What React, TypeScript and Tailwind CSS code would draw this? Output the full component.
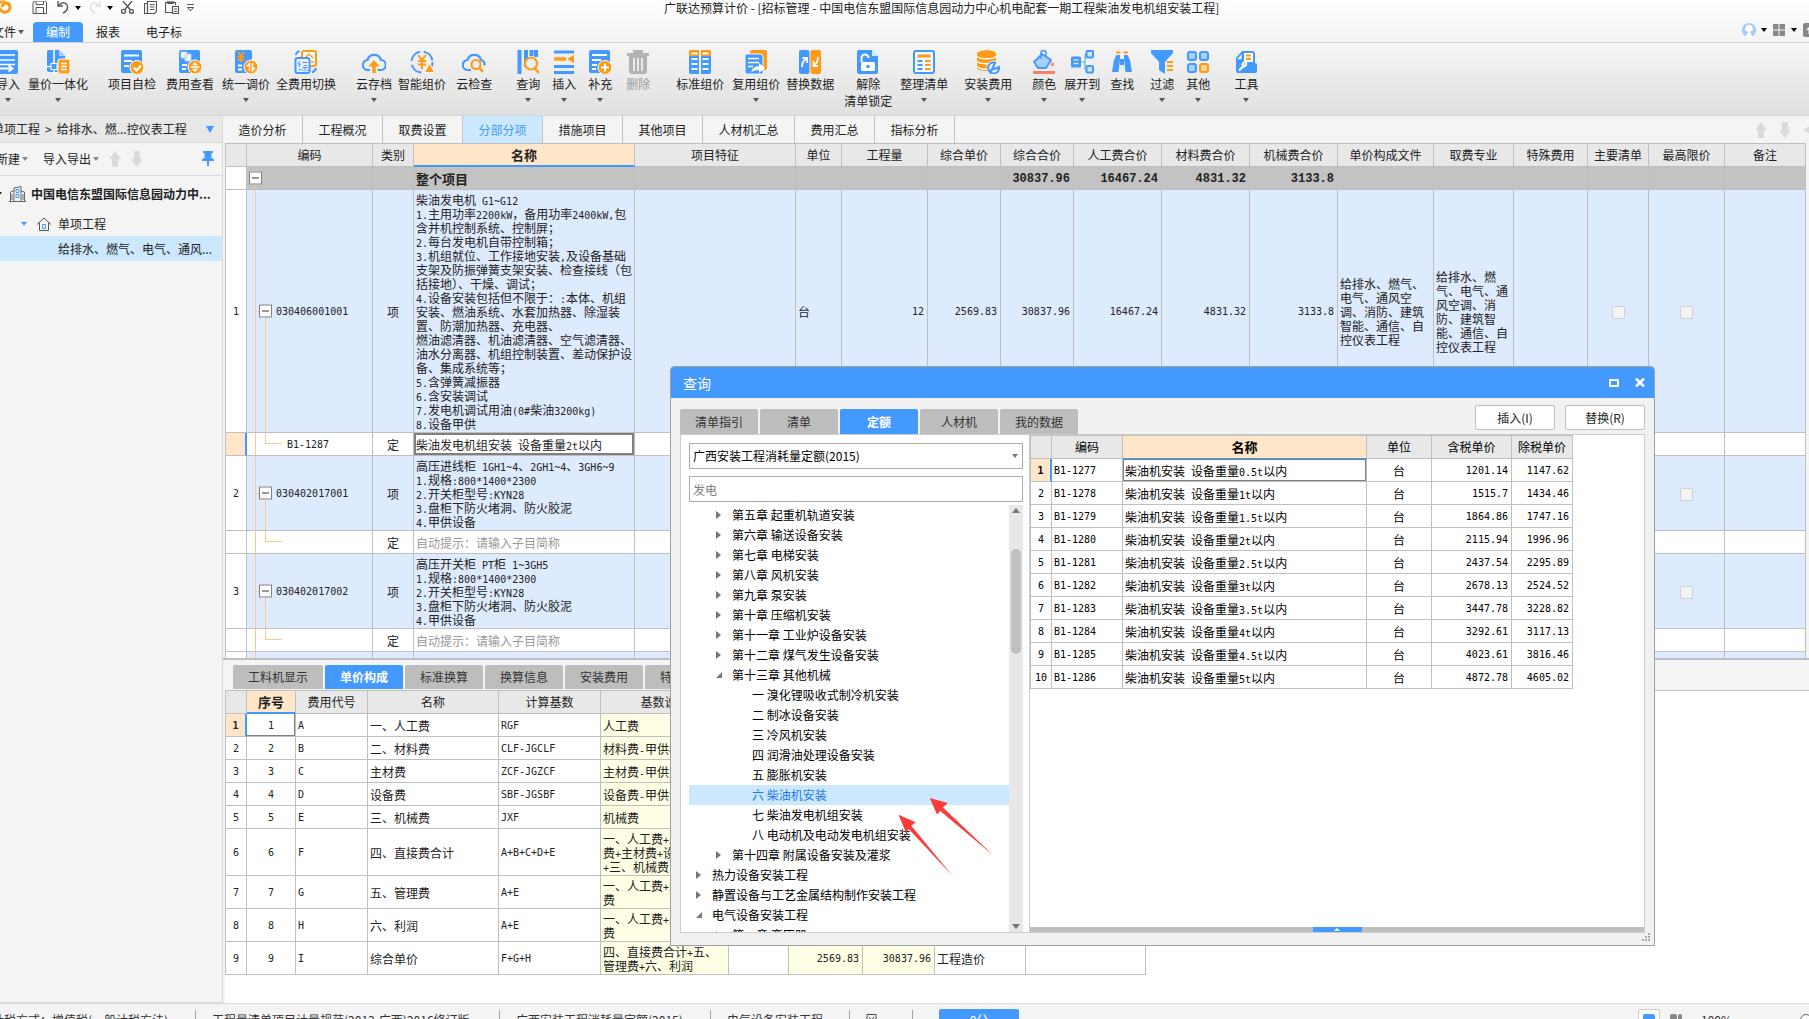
import React from "react";

interface RibbonItem {
  label: string;
  second?: string;
  icon: string;
  space: string;
  menu?: boolean;
  disabled?: boolean;
}

interface GridRow {
  kind: "item" | "quota";
  no?: string;
  code?: string;
  lines: string[];
  values?: string[];
  files?: string[];
  majors?: string[];
  active?: boolean;
  hint?: boolean;
}

interface TreeNode {
  text: string;
  level: number;
  state?: "open" | "closed";
  selected?: boolean;
}

const ribbonItems: RibbonItem[] = [
  { label: "导入", icon: "import", space: "-ml-1", menu: true },
  { label: "量价一体化", icon: "merge", space: "ml-2", menu: true },
  { label: "项目自检", icon: "check", space: "ml-5" },
  { label: "费用查看", icon: "fee", space: "ml-2.5" },
  { label: "统一调价", icon: "adjust", space: "ml-2", menu: true },
  { label: "全费用切换", icon: "switch", space: "ml-1.5" },
  { label: "云存档", icon: "cloudUp", space: "ml-5", menu: true },
  { label: "智能组价", icon: "smart", space: "ml-1.5" },
  { label: "云检查", icon: "cloudCheck", space: "ml-2.5" },
  { label: "查询", icon: "query", space: "ml-6", menu: true },
  { label: "插入", icon: "insert", space: "ml-3", menu: true },
  { label: "补充", icon: "supply", space: "ml-3", menu: true },
  { label: "删除", icon: "trash", space: "ml-3.5", disabled: true },
  { label: "标准组价", icon: "standard", space: "ml-6.5" },
  { label: "复用组价", icon: "reuse", space: "ml-2", menu: true },
  { label: "替换数据", icon: "replace", space: "ml-1.5" },
  { label: "解除", second: "清单锁定", icon: "unlock", space: "ml-2.5" },
  { label: "整理清单", icon: "tidy", space: "ml-2", menu: true },
  { label: "安装费用", icon: "install", space: "ml-4", menu: true },
  { label: "颜色", icon: "color", space: "ml-5", menu: true },
  { label: "展开到", icon: "expand", space: "ml-2", menu: true },
  { label: "查找", icon: "find", space: "ml-2.5" },
  { label: "过滤", icon: "filter", space: "ml-4", menu: true },
  { label: "其他", icon: "other", space: "ml-3", menu: true },
  { label: "工具", icon: "tools", space: "ml-6", menu: true },
];

const sectionTabs = [
  "造价分析",
  "工程概况",
  "取费设置",
  "分部分项",
  "措施项目",
  "其他项目",
  "人材机汇总",
  "费用汇总",
  "指标分析",
];

const gridHeaders = [
  "",
  "编码",
  "类别",
  "名称",
  "项目特征",
  "单位",
  "工程量",
  "综合单价",
  "综合合价",
  "人工费合价",
  "材料费合价",
  "机械费合价",
  "单价构成文件",
  "取费专业",
  "特殊费用",
  "主要清单",
  "最高限价",
  "备注",
];

const gridWidths = [
  "w-[21px]",
  "w-[126px]",
  "w-[41px]",
  "w-[221px]",
  "w-[161px]",
  "w-[46px]",
  "w-[86px]",
  "w-[73px]",
  "w-[73px]",
  "w-[88px]",
  "w-[88px]",
  "w-[88px]",
  "w-[96px]",
  "w-[80px]",
  "w-[74px]",
  "w-[61px]",
  "w-[76px]",
  "",
];

const gridRows: GridRow[] = [
  {
    kind: "item",
    no: "1",
    code: "030406001001",
    lines: [
      "柴油发电机 G1~G12",
      "1.主用功率2200kW，备用功率2400kW,包",
      "含并机控制系统、控制屏；",
      "2.每台发电机自带控制箱；",
      "3.机组就位、工作接地安装,及设备基础",
      "支架及防振弹簧支架安装、检查接线（包",
      "括接地）、干燥、调试；",
      "4.设备安装包括但不限于：:本体、机组",
      "安装、燃油系统、水套加热器、除湿装",
      "置、防潮加热器、充电器、",
      "燃油滤清器、机油滤清器、空气滤清器、",
      "油水分离器、机组控制装置、差动保护设",
      "备、集成系统等；",
      "5.含弹簧减振器",
      "6.含安装调试",
      "7.发电机调试用油(0#柴油3200kg)",
      "8.设备甲供",
    ],
    values: ["12", "2569.83", "30837.96", "16467.24", "4831.32", "3133.8"],
    files: ["给排水、燃气、", "电气、通风空", "调、消防、建筑", "智能、通信、自", "控仪表工程"],
    majors: ["给排水、燃", "气、电气、通", "风空调、消", "防、建筑智", "能、通信、自", "控仪表工程"],
  },
  { kind: "quota", code: "B1-1287", lines: ["柴油发电机组安装 设备重量2t以内"], active: true },
  {
    kind: "item",
    no: "2",
    code: "030402017001",
    lines: [
      "高压进线柜 1GH1~4、2GH1~4、3GH6~9",
      "1.规格:800*1400*2300",
      "2.开关柜型号:KYN28",
      "3.盘柜下防火堵洞、防火胶泥",
      "4.甲供设备",
    ],
  },
  { kind: "quota", lines: ["自动提示：请输入子目简称"], hint: true },
  {
    kind: "item",
    no: "3",
    code: "030402017002",
    lines: [
      "高压开关柜 PT柜 1~3GH5",
      "1.规格:800*1400*2300",
      "2.开关柜型号:KYN28",
      "3.盘柜下防火堵洞、防火胶泥",
      "4.甲供设备",
    ],
  },
  { kind: "quota", lines: ["自动提示：请输入子目简称"], hint: true },
  { kind: "item", lines: ["高压出线柜 1~3GH7~12、4GH5~8"] },
];

const detailTabs = ["工料机显示", "单价构成", "标准换算", "换算信息", "安装费用", "特征及内容"];

const detailWidths = [
  "w-[21px]",
  "w-[49px]",
  "w-[72px]",
  "w-[131px]",
  "w-[102px]",
  "w-[128px]",
  "w-[60px]",
  "w-[74px]",
  "w-[72px]",
  "w-[91px]",
  "w-[120px]",
];

const detailHeaders = ["", "序号", "费用代号", "名称", "计算基数", "基数说明", "", "", "", "", ""];

const detailRows = [
  { code: "A", name: "一、人工费", base: "RGF", note: ["人工费"] },
  { code: "B", name: "二、材料费", base: "CLF-JGCLF", note: ["材料费-甲供材料费"] },
  { code: "C", name: "主材费", base: "ZCF-JGZCF", note: ["主材费-甲供主材费"] },
  { code: "D", name: "设备费", base: "SBF-JGSBF", note: ["设备费-甲供设备费"] },
  { code: "E", name: "三、机械费", base: "JXF", note: ["机械费"] },
  { code: "F", name: "四、直接费合计", base: "A+B+C+D+E", note: ["一、人工费+二、材料", "费+主材费+设备费", "+三、机械费"] },
  { code: "G", name: "五、管理费", base: "A+E", note: ["一、人工费+三、机械", "费"] },
  { code: "H", name: "六、利润", base: "A+E", note: ["一、人工费+三、机械", "费"] },
  {
    code: "I",
    name: "综合单价",
    base: "F+G+H",
    note: ["四、直接费合计+五、", "管理费+六、利润"],
    price: "2569.83",
    total: "30837.96",
    type: "工程造价",
  },
];

const treeNodes: TreeNode[] = [
  { text: "第五章 起重机轨道安装", level: 1, state: "closed" },
  { text: "第六章 输送设备安装", level: 1, state: "closed" },
  { text: "第七章 电梯安装", level: 1, state: "closed" },
  { text: "第八章 风机安装", level: 1, state: "closed" },
  { text: "第九章 泵安装", level: 1, state: "closed" },
  { text: "第十章 压缩机安装", level: 1, state: "closed" },
  { text: "第十一章 工业炉设备安装", level: 1, state: "closed" },
  { text: "第十二章 煤气发生设备安装", level: 1, state: "closed" },
  { text: "第十三章 其他机械", level: 1, state: "open" },
  { text: "一 溴化锂吸收式制冷机安装", level: 2 },
  { text: "二 制冰设备安装", level: 2 },
  { text: "三 冷风机安装", level: 2 },
  { text: "四 润滑油处理设备安装", level: 2 },
  { text: "五 膨胀机安装", level: 2 },
  { text: "六 柴油机安装", level: 2, selected: true },
  { text: "七 柴油发电机组安装", level: 2 },
  { text: "八 电动机及电动发电机组安装", level: 2 },
  { text: "第十四章 附属设备安装及灌浆", level: 1, state: "closed" },
  { text: "热力设备安装工程", level: 0, state: "closed" },
  { text: "静置设备与工艺金属结构制作安装工程", level: 0, state: "closed" },
  { text: "电气设备安装工程", level: 0, state: "open" },
  { text: "第一章 变压器", level: 1, state: "closed" },
];

const quotaRows = [
  ["B1-1277", "0.5t", "1201.14", "1147.62"],
  ["B1-1278", "1t", "1515.7", "1434.46"],
  ["B1-1279", "1.5t", "1864.86", "1747.16"],
  ["B1-1280", "2t", "2115.94", "1996.96"],
  ["B1-1281", "2.5t", "2437.54", "2295.89"],
  ["B1-1282", "3t", "2678.13", "2524.52"],
  ["B1-1283", "3.5t", "3447.78", "3228.82"],
  ["B1-1284", "4t", "3292.61", "3117.13"],
  ["B1-1285", "4.5t", "4023.61", "3816.46"],
  ["B1-1286", "5t", "4872.78", "4605.02"],
];

const BLUE = "#4499ff";
const ORANGE = "#ff9a17";

const ribbonIcons: Record<string, React.ReactNode> = {
  import: (
    <>
      <rect x="1" y="0" width="21" height="24" rx="2" fill={BLUE} />
      <path d="M4 5h15M4 10h15M4 14.500h15" stroke="#fff" strokeWidth="1.500" />
      <path d="M4 18.500h12M12.500 15.500l4 3-4 3" stroke="#fff" strokeWidth="2" fill="none" />
    </>
  ),
  merge: (
    <>
      <path d="M1 2a2 2 0 0 1 2-2h10l6 6v16H3a2 2 0 0 1-2-2z" fill={BLUE} />
      <path d="M13 0v6h6z" fill="#a8d0ff" />
      <path d="M8 0v24M0 16.500h12" stroke="#fff" strokeWidth="1.500" />
      <rect x="5" y="13.500" width="6" height="6" fill={BLUE} stroke="#fff" />
      <rect x="12" y="9" width="12" height="15" rx="2" fill={ORANGE} stroke="#fff" />
      <path d="M15 13.500h6M15 16.500h6M15 19.500h6" stroke="#fff" strokeWidth="1.500" />
    </>
  ),
  check: (
    <>
      <rect x="1" y="0" width="21" height="23" rx="2" fill={BLUE} />
      <path d="M4 5.500h15M4 11h8M4 16h5" stroke="#fff" strokeWidth="2" />
      <circle cx="17" cy="17.500" r="7" fill={ORANGE} stroke="#fff" />
      <path d="M13.500 17.500l3 3 4.500-5" stroke="#fff" strokeWidth="2" fill="none" />
    </>
  ),
  fee: (
    <>
      <rect x="1" y="0" width="21" height="23" rx="2" fill={BLUE} />
      <path d="M3 2h6v6H3zM7 4h6v7H7z" fill="#fff" stroke="#a8d0ff" />
      <path d="M4 15h5M4 19h4" stroke="#fff" strokeWidth="2" />
      <circle cx="17" cy="17" r="7" fill={ORANGE} stroke="#fff" />
      <path d="M12.500 17h9M15.500 14.500l1.500-1.500 1.500 1.500zM15.500 19.500l1.500 1.500 1.500-1.500z" stroke="#fff" strokeWidth="1.300" fill="#fff" />
    </>
  ),
  adjust: (
    <>
      <rect x="1" y="0" width="17" height="23" rx="2" fill={BLUE} />
      <path d="M4 2l3 4 3-4M4 7h6M4 10h6M7 6v6" stroke={ORANGE} strokeWidth="2" fill="none" />
      <path d="M4 15.500h4M4 19.500h4" stroke="#fff" strokeWidth="2" />
      <circle cx="17" cy="17" r="7" fill={ORANGE} stroke="#fff" />
      <path d="M15.500 21v-7.500l-2.500 3M18.500 13v7.500l2.500-3" stroke="#fff" strokeWidth="1.500" fill="none" />
    </>
  ),
  switch: (
    <>
      <rect x="8" y="1" width="14" height="15" rx="2" fill="#fff" stroke={ORANGE} strokeWidth="2" />
      <path d="M11 8l4-4 4 4M15 8v5M17 12h3" stroke={ORANGE} strokeWidth="1.500" fill="none" />
      <rect x="1.500" y="8" width="14" height="15" rx="2" fill="#eaf3ff" stroke={BLUE} strokeWidth="2" />
      <path d="M6 11l-2 3h2.500l-2 3M4.500 20l3-1M8.500 12.500h5M9.500 15.500h3.500M8.500 17.500h5M11 17.500v4M9 19.500l-.500 1.500M13 19.500l.500 1.500" stroke={BLUE} fill="none" />
      <path d="M1.500 5q1-3 4-4M22 18q-.500 3-4 4.500" stroke={BLUE} strokeWidth="2" fill="none" />
    </>
  ),
  cloudUp: (
    <>
      <path d="M8 20H6a5 5 0 0 1-.500-10 7 7 0 0 1 13.500 0 5 5 0 0 1-.500 10h-3" stroke={BLUE} strokeWidth="2.200" fill="none" />
      <path d="M12 23v-8" stroke={ORANGE} strokeWidth="3.500" />
      <path d="M6.500 16.500L12 10l5.500 6.500z" fill={ORANGE} />
    </>
  ),
  smart: (
    <>
      <circle cx="12" cy="12" r="10.500" fill="none" stroke={BLUE} strokeWidth="2" strokeDasharray="13 4" />
      <path d="M8 5l4 5 4-5M8 11h8M8 14.500h8M12 10v9" stroke={ORANGE} strokeWidth="2" fill="none" />
      <path d="M19.500 13l5 9.500h-10z" fill={ORANGE} stroke="#fff" />
    </>
  ),
  cloudCheck: (
    <>
      <path d="M9 20H6a5 5 0 0 1-.500-10 7 7 0 0 1 13.500 0q4 1 3.500 5.500" stroke={BLUE} strokeWidth="2.200" fill="none" />
      <circle cx="14" cy="14.500" r="4.500" stroke={ORANGE} strokeWidth="2.200" fill="none" />
      <path d="M17.500 18l3.500 4" stroke={ORANGE} strokeWidth="2.500" />
    </>
  ),
  query: (
    <>
      <path d="M3.500 0v24M10 0v17M15.500 0v6M20 0v7" stroke={BLUE} strokeWidth="4" />
      <circle cx="15" cy="13.500" r="6" stroke={ORANGE} strokeWidth="2.200" fill="#f0f0f0" />
      <path d="M19 18.500l4 4.500" stroke={ORANGE} strokeWidth="2.500" />
    </>
  ),
  insert: (
    <>
      <path d="M2 2h20M2 16.500h20M2 22.500h20" stroke={BLUE} strokeWidth="3" />
      <path d="M2 9h12" stroke={ORANGE} strokeWidth="3.500" />
      <path d="M15 9l7-4v8z" fill={ORANGE} />
    </>
  ),
  supply: (
    <>
      <rect x="1" y="0" width="21" height="23" rx="2" fill={BLUE} />
      <path d="M4 5h15M4 10h9M4 15h5M4 19h4" stroke="#fff" strokeWidth="1.800" />
      <circle cx="17" cy="17.500" r="7" fill={ORANGE} stroke="#fff" />
      <path d="M17 13.500v8M13 17.500h8" stroke="#fff" strokeWidth="2" />
    </>
  ),
  trash: (
    <>
      <path d="M1 3h22v3H1zM7 0h10v3H7zM3 6h18v15a3 3 0 0 1-3 3H6a3 3 0 0 1-3-3z" fill="#b3b3b3" />
      <path d="M8 8v13M12 8v13M16 8v13" stroke="#f0f0f0" strokeWidth="1.800" />
    </>
  ),
  standard: (
    <>
      <rect x="1" y="0" width="22" height="24" rx="2" fill={BLUE} />
      <path d="M1 6V2a2 2 0 0 1 2-2h18a2 2 0 0 1 2 2v4z" fill={ORANGE} />
      <path d="M12 0v24" stroke="#f0f0f0" strokeWidth="2" />
      <path d="M3.500 3.500h6M14.500 3.500h6M3.500 9h6M14.500 9h6M3.500 14h6M14.500 14h6M3.500 19h6M14.500 19h6" stroke="#fff" strokeWidth="1.800" />
    </>
  ),
  reuse: (
    <>
      <rect x="6" y="0" width="17" height="20" rx="2" fill={ORANGE} />
      <path d="M1 6a2 2 0 0 1 2-2h14l2 2v18H3a2 2 0 0 1-2-2z" fill={BLUE} stroke="#f5f5f5" />
      <path d="M4 8.500h11M4 12.500h11M4 16.500h5" stroke="#fff" strokeWidth="1.500" />
      <path d="M7 22q2-6 8-6v-3l6 5-6 5v-3q-4 0-8 2z" fill="#fff" />
    </>
  ),
  replace: (
    <>
      <rect x="1" y="0" width="10.500" height="24" rx="2" fill={BLUE} />
      <rect x="12.500" y="0" width="10.500" height="24" rx="2" fill={ORANGE} />
      <path d="M4 17q0-6 4-8M4.500 8H9v5M20 7q0 6-4 8M20 16h-4.500v-5" stroke="#fff" strokeWidth="1.800" fill="none" />
    </>
  ),
  unlock: (
    <>
      <path d="M1 2a2 2 0 0 1 2-2h13l6 6v16a2 2 0 0 1-2 2H3a2 2 0 0 1-2-2z" fill={BLUE} />
      <path d="M16 0v6h6z" fill="#d9eaff" />
      <path d="M5.500 12V8a3.500 3.500 0 0 1 7 0" stroke="#fff" strokeWidth="2" fill="none" />
      <rect x="5" y="12" width="14" height="9" rx="1.500" fill="#fff" />
      <circle cx="12" cy="16.500" r="1.800" fill={BLUE} />
    </>
  ),
  tidy: (
    <>
      <rect x="2" y="1" width="20" height="22" rx="2" fill="#f5f9ff" stroke={BLUE} strokeWidth="2" />
      <path d="M5.500 6h13" stroke={ORANGE} strokeWidth="3" />
      <path d="M5.500 11h5M5.500 15h5M5.500 19h5" stroke={BLUE} strokeWidth="2" />
      <path d="M13 11h5.500M13 15h5.500M13 19h5.500" stroke={ORANGE} strokeWidth="2" />
    </>
  ),
  install: (
    <>
      <path d="M1 4c0-5 19-5 19 0v14c0 4-19 4-19 0z" fill={ORANGE} />
      <path d="M1 6.500c3 3 16 3 19 0M1 11.500c3 3 16 3 19 0M1 16.500c3 3 8 3 10 2.500" stroke="#fff" strokeWidth="1.500" fill="none" />
      <circle cx="17.500" cy="17.500" r="7" fill="#f0f0f0" />
      <path d="M20 13a5.500 5.500 0 1 0 3 4l-4 2-2-2 2-4" stroke={BLUE} strokeWidth="2" fill="none" />
      <path d="M13 22.500l5-5" stroke={BLUE} strokeWidth="2.500" />
    </>
  ),
  color: (
    <>
      <path d="M10 4l9 6-5 8H6l-4-6z" fill="#a8d0ff" stroke={BLUE} strokeWidth="2" strokeLinejoin="round" />
      <path d="M9 9V3a2.500 2.500 0 0 1 5 0v3" stroke={BLUE} strokeWidth="1.500" fill="none" />
      <path d="M20.500 12q2 3 0 4.500-2.500-1.500 0-4.500z" stroke="#f98" fill="#f76" />
      <path d="M1 22.500h22" stroke="#fa7f66" strokeWidth="3" />
    </>
  ),
  expand: (
    <>
      <rect x="1" y="6.500" width="10" height="11" rx="1.500" fill={BLUE} />
      <path d="M3.500 10h5M3.500 13.500h5" stroke="#cfe4ff" strokeWidth="1.500" />
      <path d="M11 12h4M15 4.500v15M15 4h2M15 20h2" stroke="#6b9" strokeWidth="1.200" />
      <rect x="16.500" y="1" width="6.500" height="6.500" rx="1" fill="#cfe4ff" stroke={BLUE} strokeWidth="2" />
      <rect x="16.500" y="16" width="6.500" height="6.500" rx="1" fill="#cfe4ff" stroke={BLUE} strokeWidth="2" />
    </>
  ),
  find: (
    <>
      <path d="M6.500 5H10v4L8.500 22H2L4 10zM17.500 5H14v4l1.500 13H22l-2-12z" fill={BLUE} />
      <path d="M10 9h4v6h-4z" fill={BLUE} />
      <path d="M6 2.500h4.500M13.500 2.500H18" stroke={ORANGE} strokeWidth="2" />
    </>
  ),
  filter: (
    <>
      <path d="M1 0h22v3l-8 9v12l-6-4v-8L1 3z" fill={BLUE} />
      <path d="M17 12h6M17 16h6M17 20h6" stroke={ORANGE} strokeWidth="2" />
    </>
  ),
  other: (
    <>
      <rect x="2" y="2" width="8" height="8" rx="2" fill="#a8d0ff" stroke={BLUE} strokeWidth="2" />
      <rect x="14" y="2" width="8" height="8" rx="2" fill="#a8d0ff" stroke={BLUE} strokeWidth="2" />
      <rect x="2" y="14" width="8" height="8" rx="2" fill="#a8d0ff" stroke={BLUE} strokeWidth="2" />
      <rect x="14" y="14" width="8" height="8" rx="2" fill="#ffd08f" stroke={ORANGE} strokeWidth="2" />
    </>
  ),
  tools: (
    <>
      <path d="M8 1h10a3 3 0 0 1 3 3v9l2 1v7a2 2 0 0 1-2 2H4a2 2 0 0 1-2-2V8z" fill={BLUE} />
      <path d="M10 3h8a1 1 0 0 1 1 1v8h-9zM7.500 4v5l-4 .500z" fill="#fff" />
      <path d="M12 5.500h5M12 9h5" stroke={ORANGE} strokeWidth="2" />
      <path d="M5 20.500l4-4M12 12v3l-2 1.500-1.500-2 1.500-2.500" stroke="#fff" strokeWidth="2.200" fill="none" />
    </>
  ),
};

const Caret: React.FC<{ className?: string }> = ({ className = "text-[#555]" }) => (
  <svg width="6" height="4" viewBox="0 0 6 4" className={`shrink-0 ${className}`}>
    <path d="M0 0h6L3 4z" fill="currentColor" />
  </svg>
);

// Latin runs are set in a narrow mono face so two of them take one Han cell
const Mixed: React.FC<{ text: string }> = ({ text }) => (
  <>
    {text.split(/([\x20-\x7e]+)/).map((part, i) =>
      i % 2 === 1 ? (
        <span key={i} className="font-['DejaVu_Sans_Mono',monospace] text-[10px]">
          {part}
        </span>
      ) : (
        part
      )
    )}
  </>
);

const Lines: React.FC<{ lines: string[] }> = ({ lines }) => (
  <>
    {lines.map((line, i) => (
      <div key={i} className="h-3.5 whitespace-pre leading-[14px]">
        <Mixed text={line} />
      </div>
    ))}
  </>
);

const MoveArrow: React.FC<{ down?: boolean }> = ({ down }) => (
  <svg width="12" height="16" viewBox="0 0 12 16" className={down ? "rotate-180" : ""}>
    <path d="M6 0l6 8H9v8H3V8H0z" fill="#dadada" />
  </svg>
);

const TitleBar: React.FC = () => (
  <header className="relative bg-gradient-to-b from-white to-[#f3f3f3]">
    <div className="flex h-[22px] items-start text-[#555]">
      <svg width="14" height="15" viewBox="0 0 14 15" className="-ml-0.5">
        <path d="M0 2h7M1 8q3 5 7 4 4-1 4-5 0-3-3-4-4 0-5 4" fill="none" stroke={ORANGE} strokeWidth="3" />
      </svg>
      <div className="ml-5 flex items-center pt-px">
        <button aria-label="保存">
          <svg width="15" height="13" viewBox="0 0 15 13" fill="none" stroke="currentColor">
            <path d="M1 12.500V1.500L3.500 0H13l1.500 1.500v11zM4 12.500v-6h7.500v6M4 .500v3h7.500v-3" />
          </svg>
        </button>
        <button aria-label="撤销" className="ml-2.5 flex items-center gap-1.5">
          <svg width="12" height="13" viewBox="0 0 12 13" fill="none" stroke="currentColor" strokeWidth="1.400">
            <path d="M1 0v5h5M1 5Q7-1 10 4q2 5-4 8" />
          </svg>
          <Caret className="text-black" />
        </button>
        <button aria-label="重做" className="ml-2 flex items-center gap-1.5 text-[#ddd]">
          <svg width="12" height="13" viewBox="0 0 12 13" fill="none" stroke="currentColor" strokeWidth="1.400">
            <path d="M11 0v5H6M11 5Q5-1 2 4q-2 5 4 8" />
          </svg>
          <Caret className="text-black" />
        </button>
        <button aria-label="剪切" className="ml-2">
          <svg width="13" height="13" viewBox="0 0 13 13" fill="none" stroke="currentColor" strokeWidth="1.300">
            <path d="M2 0l7 8.500M11 0L4 8.500" />
            <circle cx="2.500" cy="10.300" r="2" />
            <circle cx="10.500" cy="10.300" r="2" />
          </svg>
        </button>
        <button aria-label="复制" className="ml-2.5">
          <svg width="13" height="13" viewBox="0 0 13 13" fill="none" stroke="currentColor" strokeWidth="1.200">
            <path d="M3.500 2.500h-3v10h9M3.500.500h9v10l-2 2h-7zM6 3.500h4.500M6 6h4.500M6 8.500h4.500" />
          </svg>
        </button>
        <button aria-label="粘贴" className="ml-2">
          <svg width="14" height="13" viewBox="0 0 14 13" fill="none" stroke="currentColor" strokeWidth="1.200">
            <path d="M7 11.500H.500v-10h10V4M3 0h5v2.500H3zM7.500 5.500h6v7h-6zM9 8h3M9 10.500h3" />
          </svg>
        </button>
        <button aria-label="自定义" className="ml-2">
          <svg width="7" height="8" viewBox="0 0 7 8" fill="none" stroke="currentColor">
            <path d="M0 .500h7M.500 3.500h6L3.500 7z" />
          </svg>
        </button>
      </div>
      <h1 className="absolute left-[664px] top-0 text-xs leading-4 text-[#222]">
        广联达预算计价 - [招标管理 - 中国电信东盟国际信息园动力中心机电配套一期工程柴油发电机组安装工程]
      </h1>
    </div>
    <nav className="flex h-5 items-end text-xs text-[#222]">
      <button className="-ml-2 flex h-5 w-[31px] items-center gap-0.5 whitespace-nowrap">
        文件
        <Caret />
      </button>
      <button className="ml-2.5 h-5 w-[50px] rounded-t bg-[#4499ff] text-white">编制</button>
      <button className="h-5 w-[50px]">报表</button>
      <button className="h-5 w-[62px]">电子标</button>
      <div className="ml-auto -mr-2 flex h-6 items-center">
        <button aria-label="用户" className="flex items-center gap-1">
          <svg width="16" height="16" viewBox="0 0 18 16">
            <circle cx="9" cy="8" r="8" fill="#9fcbff" />
            <path d="M5 6a4 4 0 0 1 8 0l1 2-2 1-3 2-3-2-2-1zM5 16l3-6h2l3 6z" fill="#fff" />
          </svg>
          <Caret className="text-black" />
        </button>
        <button aria-label="布局" className="ml-1.5 flex items-center gap-1.5">
          <svg width="12" height="12" viewBox="0 0 12 12" fill="#888">
            <path d="M0 0h5.500v5.500H0zM6.500 0H12v5.500H6.500zM0 6.500h5.500V12H0zM6.500 6.500H12V12H6.500z" />
          </svg>
          <Caret className="text-black" />
        </button>
        <button aria-label="收起" className="ml-1.5">
          <svg width="14" height="14" viewBox="0 0 14 14">
            <rect width="14" height="14" rx="2" fill="#888" />
            <path d="M7 3l4 4H8.500v4h-3V7H3z" fill="#fff" />
          </svg>
        </button>
      </div>
    </nav>
  </header>
);

const Ribbon: React.FC = () => (
  <div className="flex h-[74px] items-start border-y border-[#d4d4d4] bg-gradient-to-b from-[#f5f5f5] to-[#e0e0e0] pt-[7px]">
    {ribbonItems.map((item) => (
      <button
        key={item.label}
        disabled={item.disabled}
        className={`flex shrink-0 flex-col items-center text-xs leading-[17px] ${item.space} ${
          item.disabled ? "text-[#9a9a9a]" : "text-[#222]"
        }`}
      >
        <svg width="24" height="24" viewBox="0 0 24 24" className="mb-px">
          {ribbonIcons[item.icon]}
        </svg>
        <span className="whitespace-nowrap">{item.label}</span>
        {item.second && <span className="whitespace-nowrap">{item.second}</span>}
        {item.menu && <Caret className="mt-1.5 text-[#555]" />}
      </button>
    ))}
  </div>
);

const ProjectPanel: React.FC = () => (
  <aside className="flex w-[223px] shrink-0 flex-col border-r border-b border-[#d9d9d9] bg-[#f4f4f4] text-xs text-[#222]">
    <button className="flex h-[27px] shrink-0 items-center border-b border-[#d9d9d9] bg-[#e8e8e8]">
      <span className="-ml-2 flex gap-[5px] whitespace-nowrap">
        <span>单项工程</span>
        <span>&gt;</span>
        <span>给排水、燃...控仪表工程</span>
      </span>
      <svg width="8" height="7" viewBox="0 0 8 7" className="mr-2 ml-auto">
        <path d="M0 0h8L4 7z" fill={BLUE} />
      </svg>
    </button>
    <div className="flex h-[33px] shrink-0 items-center border-b border-[#d9d9d9]">
      <button className="-ml-1 flex items-center gap-0.5">
        新建
        <Caret className="text-[#888]" />
      </button>
      <button className="ml-[15px] flex items-center gap-0.5">
        导入导出
        <Caret className="text-[#888]" />
      </button>
      <span className="ml-2.5 flex gap-2.5">
        <MoveArrow />
        <MoveArrow down />
      </span>
      <button aria-label="固定" className="mr-2 ml-auto">
        <svg width="12" height="16" viewBox="0 0 12 16" fill={BLUE}>
          <path d="M1 0h10v2H9.500v5L12 8v2H0V8l2.500-1V2H1zM5 10h2v4l-1 2-1-2z" />
        </svg>
      </button>
    </div>
    <ul>
      <li className="flex h-9 items-center font-bold">
        <Caret className="-ml-1" />
        <svg width="17" height="16" viewBox="0 0 17 16" fill="none" stroke="#666" className="mr-[5px] ml-[7px]">
          <path d="M0 15.500h17M1.500 15.500V6L5 4.500M5 15.500V2L12 .500v15M12 5l3.500 1v9.500M3 8v6M14 8v6" />
          <path d="M7 3.500h3v3H7zM7 8.500h3v3H7z" stroke={BLUE} />
        </svg>
        中国电信东盟国际信息园动力中...
      </li>
      <li className="flex h-6 items-center">
        <Caret className="ml-[21px] text-[#4499ff]" />
        <svg width="14" height="14" viewBox="0 0 14 14" fill="none" stroke="#555" className="mr-[7px] ml-2.5">
          <path d="M0 7.500L7 1l7 6.500M2.500 6v7.500h9V6" />
          <path d="M5.500 7.500h3v4h-3z" stroke={BLUE} />
        </svg>
        单项工程
      </li>
      <li className="flex h-[25px] items-center bg-[#cce8ff] pl-[58px]">给排水、燃气、电气、通风...</li>
    </ul>
  </aside>
);

const cell = "h-[23px] border-r border-b border-[#bfbfbf] px-0.5 pt-[3px] pb-px overflow-hidden";
const headCell = "h-[23px] border-r border-b border-[#bfbfbf] whitespace-nowrap overflow-hidden";
const num = "pr-[3px] text-right font-['DejaVu_Sans_Mono',monospace] text-[10px]";
const mono = "font-['DejaVu_Sans_Mono',monospace] text-[10px]";

const Expander: React.FC<{ className: string }> = ({ className }) => (
  <button
    aria-label="折叠"
    className={`absolute top-1/2 flex h-[13px] w-[13px] -translate-y-1/2 items-center justify-center border border-[#808080] bg-white ${className}`}
  >
    <span className="h-px w-[7px] bg-[#333]" />
  </button>
);

const BillRow: React.FC<{ row: GridRow }> = ({ row }) => {
  const item = row.kind === "item";
  const values = row.values ?? ["", "", "", "", "", ""];
  return (
    <tr className={item ? "bg-[#deeafe]" : "bg-white"}>
      <td className={`${cell} text-center ${mono} ${row.active ? "border-r-2 border-r-[#4499ff] bg-[#ffe6c8]" : "bg-white"}`}>
        {row.no}
      </td>
      <td className={`${cell} relative ${mono} ${item ? "pl-[29px]" : "pl-10"}`}>
        <span className="absolute inset-y-0 left-2 w-px bg-[#ffc98a]" />
        {item && row.code && (
          <>
            <span className="absolute top-1/2 left-2 h-px w-2 bg-[#ffc98a]" />
            <span className="absolute top-1/2 bottom-0 left-[18px] w-px bg-[#ffc98a]" />
            <Expander className="left-3" />
          </>
        )}
        {!item && <span className="absolute top-0 left-[18px] h-1/2 w-[17px] border-b border-l border-[#ffc98a]" />}
        {row.code}
      </td>
      <td className={`${cell} text-center`}>{row.code || row.hint ? (item ? "项" : "定") : ""}</td>
      <td
        className={`${cell} ${row.hint ? "text-[#999]" : ""} ${
          row.active ? "shadow-[inset_0_0_0_2px_#808080]" : ""
        }`}
      >
        <Lines lines={row.lines} />
      </td>
      <td className={cell} />
      <td className={cell}>{row.values ? "台" : ""}</td>
      {values.map((value, i) => (
        <td key={i} className={`${cell} ${num}`}>
          {value}
        </td>
      ))}
      <td className={cell}>
        <Lines lines={row.files ?? []} />
      </td>
      <td className={cell}>
        <Lines lines={row.majors ?? []} />
      </td>
      <td className={cell} />
      {["主要清单", "最高限价"].map((label) => (
        <td key={label} className={`${cell} text-center`}>
          {item && row.code && (
            <input
              type="checkbox"
              aria-label={label}
              className="mx-auto block h-[13px] w-[13px] appearance-none rounded-xs border border-[#d0d0d0] bg-[#f4f4f4]"
            />
          )}
        </td>
      ))}
      <td className={cell} />
    </tr>
  );
};

const BillTable: React.FC = () => (
  <div className="mr-[3px] ml-0.5 h-[515px] shrink-0 overflow-hidden border-t border-l border-[#bfbfbf] bg-white">
    <table className="w-full table-fixed border-separate border-spacing-0 text-xs leading-[14px] text-[#222]">
      <colgroup>
        {gridWidths.map((w, i) => (
          <col key={i} className={w} />
        ))}
      </colgroup>
      <thead>
        <tr className="bg-[#e8e8e8]">
          {gridHeaders.map((title, i) => (
            <th
              key={i}
              className={`${headCell} ${
                title === "名称" ? "border-b-2 border-b-[#4499ff] bg-[#ffe6c8] text-[13px] font-bold" : "font-normal"
              }`}
            >
              {title}
            </th>
          ))}
        </tr>
      </thead>
      <tbody>
        <tr className="bg-[#c3c3c3] font-bold">
          <td className={`${cell} bg-white`} />
          <td className={`${cell} relative`}>
            <span className="absolute top-1/2 bottom-0 left-2 w-px bg-[#ffc98a]" />
            <Expander className="left-0.5" />
          </td>
          <td className={cell} />
          <td className={`${cell} text-[13px]`}>整个项目</td>
          {["", "", "", "", "30837.96", "16467.24", "4831.32", "3133.8", "", "", "", "", "", ""].map((value, i) => (
            <td
              key={i}
              className={`${cell} border-[#bababa] pr-[3px] text-right font-['Liberation_Mono',monospace] text-xs leading-[14px]`}
            >
              {value}
            </td>
          ))}
        </tr>
        {gridRows.map((row, i) => (
          <BillRow key={i} row={row} />
        ))}
      </tbody>
    </table>
  </div>
);

const DetailPanel: React.FC = () => (
  <section className="flex min-h-0 flex-1 flex-col border-t-2 border-[#bfbfbf] bg-[#f4f4f4]">
    <div className="flex h-[30px] shrink-0 items-end gap-0.5 pb-px pl-2.5 text-xs">
      {detailTabs.map((tab) => (
        <button
          key={tab}
          className={`h-6 rounded-t-xs ${tab.length > 4 ? "w-[90px]" : "w-[78px]"} ${
            tab === "单价构成" ? "bg-[#4499ff] font-bold text-white" : "bg-[#bdbdbd] text-[#333]"
          }`}
        >
          {tab}
        </button>
      ))}
    </div>
    <div className="ml-0.5 flex-1 border-t border-[#bfbfbf] bg-white">
      <table className="w-[921px] table-fixed border-separate border-spacing-0 border-l border-[#bfbfbf] text-xs leading-[14px] text-[#222]">
        <colgroup>
          {detailWidths.map((w, i) => (
            <col key={i} className={w} />
          ))}
        </colgroup>
        <thead>
          <tr className="bg-[#e8e8e8]">
            {detailHeaders.map((title, i) => (
              <th
                key={i}
                className={`${headCell} ${
                  i === 1 ? "border-b-2 border-b-[#4499ff] bg-[#ffe6c8] text-[13px] font-bold" : "font-normal"
                }`}
              >
                {title}
              </th>
            ))}
          </tr>
        </thead>
        <tbody>
          {detailRows.map((row, i) => (
            <tr key={row.code}>
              <td
                className={`${cell} text-center ${mono} ${
                  i === 0 ? "border-r-2 border-r-[#4499ff] bg-[#ffe6c8] font-bold" : ""
                }`}
              >
                {i + 1}
              </td>
              <td className={`${cell} text-center ${mono} ${i === 0 ? "shadow-[inset_-1px_-1px_0_0_#808080]" : ""}`}>
                {i + 1}
              </td>
              <td className={`${cell} ${mono}`}>{row.code}</td>
              <td className={cell}>{row.name}</td>
              <td className={`${cell} ${mono}`}>{row.base}</td>
              <td className={`${cell} bg-[#ffffe6]`}>
                <Lines lines={row.note} />
              </td>
              <td className={cell} />
              <td className={`${cell} ${num} bg-[#ffffe6]`}>{row.price}</td>
              <td className={`${cell} ${num} bg-[#ffffe6]`}>{row.total}</td>
              <td className={cell}>{row.type}</td>
              <td className={cell} />
            </tr>
          ))}
        </tbody>
      </table>
    </div>
  </section>
);

const Workspace: React.FC = () => (
  <main className="flex min-w-0 flex-1 flex-col bg-[#f4f4f4]">
    <div className="flex h-[27px] shrink-0 items-center text-xs">
      {sectionTabs.map((tab) => (
        <button
          key={tab}
          className={`h-full border-r border-[#c4c4c4] ${tab === "人材机汇总" ? "w-[92px]" : "w-20"} ${
            tab === "分部分项" ? "bg-[#cce8ff] text-[#4499ff]" : "text-[#222]"
          }`}
        >
          {tab}
        </button>
      ))}
      <div className="-mr-1.5 ml-auto flex items-center gap-3">
        <MoveArrow />
        <MoveArrow down />
        <svg width="12" height="14" viewBox="0 0 12 14">
          <path d="M12 0v14L0 7z" fill="#dadada" />
        </svg>
      </div>
    </div>
    <BillTable />
    <DetailPanel />
  </main>
);

const QuotaTree: React.FC = () => (
  <div className="flex w-[349px] shrink-0 flex-col border-r border-[#ccc] pt-2 pr-1.5 pl-2 text-xs text-black">
    <div className="relative">
      <select
        aria-label="定额库"
        className="h-[26px] w-full appearance-none border border-[#ababab] bg-white px-[3px]"
      >
        <option>广西安装工程消耗量定额(2015)</option>
      </select>
      <Caret className="absolute top-[11px] right-[5px] text-[#777]" />
    </div>
    <input
      aria-label="关键字"
      defaultValue="发电"
      className="mt-[7px] h-[26px] shrink-0 border border-[#ababab] px-[3px] text-[#808080]"
    />
    <div className="mt-[3px] flex min-h-0 flex-1">
      <ul className="flex-1 overflow-hidden">
        {treeNodes.map((node) => (
          <li
            key={node.text}
            className={`flex h-5 items-center whitespace-pre ${
              node.level === 0 ? "pl-[7px]" : node.level === 1 ? "pl-[27px]" : "pl-[47px]"
            } ${node.selected ? "bg-[#cce8ff] text-[#1a7af0]" : ""}`}
          >
            <span className="w-4 shrink-0">
              {node.state === "closed" && (
                <svg width="5" height="8" viewBox="0 0 5 8">
                  <path d="M0 0v8l5-4z" fill="#777" />
                </svg>
              )}
              {node.state === "open" && (
                <svg width="6" height="6" viewBox="0 0 6 6">
                  <path d="M6 0v6H0z" fill="#777" />
                </svg>
              )}
            </span>
            {node.text}
          </li>
        ))}
      </ul>
      <div className="flex w-3.5 flex-col items-center justify-between bg-[#e8e8e8] py-[3px]">
        <svg width="8" height="5" viewBox="0 0 8 5">
          <path d="M0 5h8L4 0z" fill="#777" />
        </svg>
        <div className="mb-auto mt-9 h-[105px] w-2.5 rounded-full bg-[#c0c0c0]" />
        <svg width="8" height="5" viewBox="0 0 8 5">
          <path d="M0 0h8L4 5z" fill="#777" />
        </svg>
      </div>
    </div>
  </div>
);

const QuotaTable: React.FC = () => (
  <table className="w-[543px] table-fixed border-separate border-spacing-0 border-t border-l border-[#bfbfbf] text-xs leading-[14px] text-black">
    <colgroup>
      <col className="w-[21px]" />
      <col className="w-[71px]" />
      <col className="w-[244px]" />
      <col className="w-[65px]" />
      <col className="w-[80px]" />
      <col className="w-[61px]" />
    </colgroup>
    <thead>
      <tr className="bg-[#e8e8e8]">
        {["", "编码", "名称", "单位", "含税单价", "除税单价"].map((title, i) => (
          <th
            key={i}
            className={`${headCell} ${
              i === 2 ? "border-b-[#4499ff] bg-[#ffe6c8] text-[13px] font-bold" : "font-normal"
            }`}
          >
            {title}
          </th>
        ))}
      </tr>
    </thead>
    <tbody>
      {quotaRows.map(([code, weight, taxed, untaxed], i) => (
        <tr key={code}>
          <td
            className={`${cell} text-center ${mono} ${
              i === 0 ? "border-r-2 border-r-[#4499ff] bg-[#ffe6c8] font-bold" : ""
            }`}
          >
            {i + 1}
          </td>
          <td className={`${cell} ${mono}`}>{code}</td>
          <td className={`${cell} ${i === 0 ? "shadow-[inset_0_0_0_1px_#808080]" : ""}`}>
            <Lines lines={[`柴油机安装 设备重量${weight}以内`]} />
          </td>
          <td className={`${cell} text-center`}>台</td>
          <td className={`${cell} ${num}`}>{taxed}</td>
          <td className={`${cell} ${num}`}>{untaxed}</td>
        </tr>
      ))}
    </tbody>
  </table>
);

const QueryDialog: React.FC = () => (
  <div
    role="dialog"
    aria-label="查询"
    className="absolute top-[366px] left-[670px] flex h-[580px] w-[985px] flex-col rounded-t border border-[#a0a0a0] bg-[#f1f1f1] pb-3"
  >
    <div className="flex h-[31px] shrink-0 items-center rounded-t-[3px] bg-[#4499ff] pr-[9px] pl-3 text-white">
      <h2 className="text-sm">查询</h2>
      <button aria-label="最大化" className="ml-auto h-2 w-2.5 border-2 border-white" />
      <button aria-label="关闭" className="ml-4">
        <svg width="10" height="9" viewBox="0 0 10 9">
          <path d="M1 .500l8 8M9 .500l-8 8" stroke="#fff" strokeWidth="2.500" />
        </svg>
      </button>
    </div>
    <div className="flex shrink-0 items-end gap-0.5 px-[9px] pt-[7px] text-xs">
      {["清单指引", "清单", "定额", "人材机", "我的数据"].map((tab) => (
        <button
          key={tab}
          className={`h-[25px] w-[78px] rounded-t-xs ${
            tab === "定额" ? "bg-[#4499ff] font-bold text-white" : "bg-[#bdbdbd] text-[#333]"
          }`}
        >
          {tab}
        </button>
      ))}
      <div className="ml-auto flex gap-2.5 pb-1 text-[#222]">
        <button className="h-[25px] w-20 rounded-xs border border-[#bfbfbf] bg-white">插入(I)</button>
        <button className="h-[25px] w-20 rounded-xs border border-[#bfbfbf] bg-white">替换(R)</button>
      </div>
    </div>
    <div className="mx-[9px] flex min-h-0 flex-1 border border-[#ccc] bg-white">
      <QuotaTree />
      <div className="flex flex-1 flex-col">
        <QuotaTable />
        <button aria-label="展开明细" className="mt-auto flex h-[5px] justify-center bg-[#bfbfbf]">
          <span className="flex h-[5px] w-[49px] items-center justify-center bg-[#4499ff]">
            <svg width="6" height="3" viewBox="0 0 6 3">
              <path d="M3 0l3 3H0z" fill="#fff" />
            </svg>
          </span>
        </button>
      </div>
    </div>
    <svg width="9" height="9" viewBox="0 0 9 9" fill="#aaa" className="absolute right-[3px] bottom-[3px]">
      <path d="M6 0h2v2H6zM6 3h2v2H6zM6 6h2v2H6zM3 3h2v2H3zM3 6h2v2H3zM0 6h2v2H0z" />
    </svg>
    <svg width="98" height="80" viewBox="0 0 98 80" fill="#ff3b38" className="absolute top-[430px] left-[227px]">
      <path d="M31.700 1l18 5-4.700 4.500 50.700 48.200-53.400-44.700-3.300 3.500z" />
      <path d="M.500 17.700l17.200 7.600-4.400 3.500 41.400 50.200-44-47-2.700 3.700z" />
    </svg>
  </div>
);

const StatusBar: React.FC = () => (
  <footer className="flex h-8 shrink-0 items-center border-t border-[#d9d9d9] bg-[#f4f4f4] text-xs whitespace-nowrap text-[#333]">
    <span className="-ml-2 w-[203px]">计税方式：增值税(一般计税方法)</span>
    <span className="flex h-5 w-[304px] items-center border-l border-[#9aa5b5] pl-4">
      工程量清单项目计量规范(2013-广西)2016修订版
    </span>
    <span className="flex h-5 w-[211px] items-center border-l border-[#9aa5b5] pl-4">
      广西安装工程消耗量定额(2015)
    </span>
    <span className="flex h-5 w-[139px] items-center border-l border-[#9aa5b5] pl-4">电气设备安装工程</span>
    <span className="flex h-5 w-16 items-center border-x border-[#9aa5b5] pl-4">
      <svg width="11" height="12" viewBox="0 0 11 12" fill="none" stroke="#444">
        <path d="M1 12V.500h9V12M3 3l5 6M8 3L3 9" />
      </svg>
    </span>
    <button className="ml-[26px] h-[22px] w-20 rounded-xs bg-[#4499ff] text-white">0分</button>
    <button aria-label="单页" className="ml-auto flex h-[22px] w-[22px] items-center justify-center rounded-xs border border-[#ccc] bg-white">
      <span className="h-3 w-3 rounded-xs bg-[#4499ff]" />
    </button>
    <button aria-label="双页" className="ml-2.5 flex gap-px">
      <span className="h-3 w-[7px] rounded-xs bg-[#888]" />
      <span className="h-3 w-1 rounded-xs bg-[#888]" />
    </button>
    <span className="ml-[19px] w-[43px]">100%</span>
    <button aria-label="缩小" className="h-0.5 w-3 bg-[#555]" />
    <span className="ml-3 h-0.5 w-8 bg-[#ccc]" />
    <span className="-mr-[3px] h-3 w-3 rounded-full border border-[#666] bg-white" />
  </footer>
);

const App: React.FC = () => {
  return (
    <div className="relative h-screen overflow-hidden font-['Noto_Sans_CJK_SC',sans-serif]">
      <div className="flex h-[calc(100vh+16px)] flex-col bg-[#f4f4f4]">
        <TitleBar />
        <Ribbon />
        <div className="flex min-h-0 flex-1">
          <ProjectPanel />
          <Workspace />
        </div>
        <StatusBar />
      </div>
      <QueryDialog />
    </div>
  );
};

export default App;
